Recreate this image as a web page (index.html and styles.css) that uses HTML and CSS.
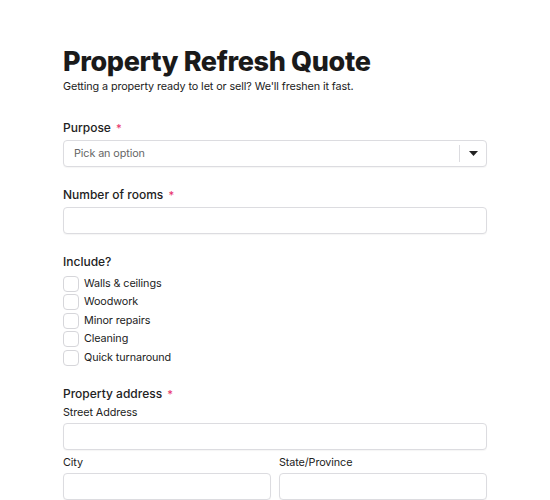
FILE: index.html
```html
<!DOCTYPE html>
<html>
<head>
<meta charset="utf-8">
<link rel="stylesheet" href="styles.css">
</head>
<body>
<main class="form">
  <header class="head">
    <h1 class="title">Property Refresh Quote</h1>
    <p class="subtitle">Getting a property ready to let or sell? We'll freshen it fast.</p>
  </header>

  <section class="field first">
    <label class="label">Purpose <span class="req">*</span></label>
    <div class="select">
      <span class="placeholder">Pick an option</span>
      <span class="sel-div"></span>
      <span class="sel-arrow"><svg width="9" height="5" viewBox="0 0 9 5"><path d="M0 0H9L4.5 5Z" fill="#222"/></svg></span>
    </div>
  </section>

  <section class="field">
    <label class="label">Number of rooms <span class="req">*</span></label>
    <div class="input"></div>
  </section>

  <section class="field">
    <label class="label">Include?</label>
    <div class="checks">
      <div class="check"><span class="box"></span><span>Walls &amp; ceilings</span></div>
      <div class="check"><span class="box"></span><span>Woodwork</span></div>
      <div class="check"><span class="box"></span><span>Minor repairs</span></div>
      <div class="check"><span class="box"></span><span>Cleaning</span></div>
      <div class="check"><span class="box"></span><span>Quick turnaround</span></div>
    </div>
  </section>

  <section class="field">
    <label class="label tight">Property address <span class="req">*</span></label>
    <div class="sub">Street Address</div>
    <div class="input"></div>
    <div class="row">
      <div class="col">
        <div class="sub">City</div>
        <div class="input"></div>
      </div>
      <div class="col">
        <div class="sub">State/Province</div>
        <div class="input"></div>
      </div>
    </div>
  </section>
</main>
</body>
</html>
```

FILE: styles.css
```css
* { box-sizing: border-box; }
html, body { margin: 0; background: #fff; }
body {
  font-family: Inter, "Noto Sans", sans-serif;
  color: #1f1f1f;
}
.form {
  width: 424px;
  margin-left: 63px;
  padding-top: 44px;
}
.title {
  margin: 0;
  font-size: 27px;
  font-weight: 800;
  letter-spacing: -0.35px;
  line-height: 36px;
  color: #1a1a1a;
}
.subtitle {
  margin: -1px 0 0;
  font-size: 10.8px;
  letter-spacing: -0.1px;
  line-height: 16px;
  color: #222;
}
.field { margin-top: 19px; }
.field.first { margin-top: 24px; }
.label {
  display: block;
  font-size: 12px;
  font-weight: 500;
  line-height: 18px;
  color: #222;
  margin-bottom: 3px;
}
.label.tight { margin-bottom: 2px; }
.req { color: #e8336b; font-size: 11px; margin-left: 2px; }
.select, .input {
  height: 27px;
  border: 1px solid #dcdce0;
  border-radius: 4px;
  background: #fff;
  box-shadow: 0 1px 1px rgba(0,0,0,0.04);
}
.field > .label + .input { margin-top: 1px; }
.select {
  display: flex;
  align-items: center;
  padding-left: 10px;
}
.placeholder { flex: 1; font-size: 10.8px; letter-spacing: -0.1px; color: #666; }
.sel-div { width: 1px; height: 17px; background: #dcdce0; }
.sel-arrow { width: 26px; display: flex; justify-content: center; align-items: center; }
.checks { display: flex; flex-direction: column; gap: 2.5px; padding-top: 1.5px; }
.check { display: flex; align-items: center; gap: 5px; font-size: 10.8px; letter-spacing: -0.1px; line-height: 16px; color: #222; }
.box {
  width: 16px; height: 16px;
  border: 1px solid #d6d6da;
  border-radius: 4px;
  background: #fff;
}
.sub { font-size: 10.8px; letter-spacing: -0.1px; line-height: 16px; color: #222; margin-bottom: 2px; }
.row { display: flex; gap: 8px; margin-top: 5px; }
.col { flex: 1; }
```
